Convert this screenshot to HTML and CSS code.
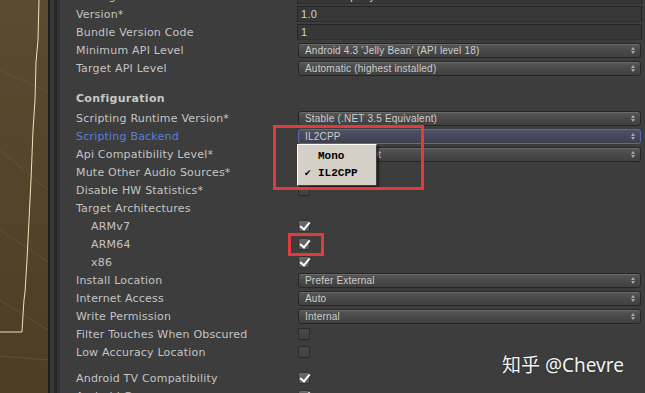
FILE: index.html
```html
<!DOCTYPE html>
<html lang="en">
<head>
    <meta charset="UTF-8">
    <title>Player Settings - Android</title>
    <link rel="stylesheet" href="styles.css">
</head>
<body>

<div class="window">
    <div class="scene">
        <svg class="scene-lines" width="48" height="393" viewBox="0 0 48 393">
            <path d="M0 70 L48 92 M0 150 L48 190 M0 230 L48 262 M0 300 L48 330 M0 356 L48 360" stroke="#6b5c3f" stroke-width="1" fill="none" opacity="0.6"/>
            <path d="M39 0 L38 40 L36 62 L35 100 L33 130 L31 180 L29 220 L27 260 L25 292 L24 300 L23 315 L22 332 L0 332" stroke="#efe3b8" stroke-width="1" fill="none"/>
        </svg>
    </div>
    <div class="splitter">
        <div class="split-a"></div>
        <div class="split-b"></div>
        <div class="split-c"></div>
        <div class="split-d"></div>
    </div>

    <div class="inspector">
        <div class="row">
            <span class="label">Package Name</span>
            <div class="textfield">com.Company.ProductName</div>
        </div>
        <div class="row">
            <span class="label">Version*</span>
            <div class="textfield">1.0</div>
        </div>
        <div class="row">
            <span class="label">Bundle Version Code</span>
            <div class="textfield">1</div>
        </div>
        <div class="row">
            <span class="label">Minimum API Level</span>
            <div class="dropdown">Android 4.3 'Jelly Bean' (API level 18)</div>
        </div>
        <div class="row">
            <span class="label">Target API Level</span>
            <div class="dropdown">Automatic (highest installed)</div>
        </div>

        <div class="heading">Configuration</div>

        <div class="row">
            <span class="label">Scripting Runtime Version*</span>
            <div class="dropdown">Stable (.NET 3.5 Equivalent)</div>
        </div>
        <div class="row">
            <span class="label active">Scripting Backend</span>
            <div class="dropdown focused">IL2CPP</div>
        </div>
        <div class="row">
            <span class="label">Api Compatibility Level*</span>
            <div class="dropdown">.NET 2.0 Subset</div>
        </div>
        <div class="row">
            <span class="label">Mute Other Audio Sources*</span>
            <div><span class="checkbox"></span></div>
        </div>
        <div class="row">
            <span class="label">Disable HW Statistics*</span>
            <div><span class="checkbox"></span></div>
        </div>
        <div class="row">
            <span class="label">Target Architectures</span>
            <div></div>
        </div>
        <div class="row">
            <span class="label sub">ARMv7</span>
            <div><span class="checkbox checked"></span></div>
        </div>
        <div class="row">
            <span class="label sub">ARM64</span>
            <div><span class="checkbox checked"></span></div>
        </div>
        <div class="row">
            <span class="label sub">x86</span>
            <div><span class="checkbox checked"></span></div>
        </div>
        <div class="row">
            <span class="label">Install Location</span>
            <div class="dropdown">Prefer External</div>
        </div>
        <div class="row">
            <span class="label">Internet Access</span>
            <div class="dropdown">Auto</div>
        </div>
        <div class="row">
            <span class="label">Write Permission</span>
            <div class="dropdown">Internal</div>
        </div>
        <div class="row">
            <span class="label">Filter Touches When Obscured</span>
            <div><span class="checkbox"></span></div>
        </div>
        <div class="row">
            <span class="label">Low Accuracy Location</span>
            <div><span class="checkbox"></span></div>
        </div>

        <div class="row spaced">
            <span class="label">Android TV Compatibility</span>
            <div><span class="checkbox checked"></span></div>
        </div>
        <div class="row">
            <span class="label">Android Game</span>
            <div><span class="checkbox checked"></span></div>
        </div>
    </div>

    <!-- dropdown menu opened over the Api Compatibility row -->
    <div class="popup">
        <div class="popup-item">Mono</div>
        <div class="popup-item selected">IL2CPP</div>
    </div>

    <!-- red annotation frames -->
    <div class="mark mark-backend"></div>
    <div class="mark mark-arm64"></div>

    <div class="watermark">知乎 @Chevre</div>
</div>

</body>
</html>
```

FILE: styles.css
```css
html, body {
    margin: 0;
    padding: 0;
    width: 645px;
    height: 393px;
    overflow: hidden;
    background-color: #3d3d3d;
}

.window {
    position: relative;
    display: flex;
    width: 645px;
    height: 393px;
    overflow: hidden;
    font-family: "DejaVu Sans", Verdana, sans-serif;
}

/* scene view on the left */
.scene {
    position: relative;
    width: 48px;
    flex-shrink: 0;
    background: linear-gradient(180deg, #5a4b31 0%, #54452c 40%, #4c3e26 100%);
}

.scene-lines {
    position: absolute;
    left: 0;
    top: 0;
}

.splitter {
    display: flex;
    flex-shrink: 0;
}

.split-a { width: 2px; background-color: #1f1f1f; }
.split-b { width: 4px; background-color: #383838; }
.split-c { width: 3px; background-color: #272727; }
.split-d { width: 3px; background-color: #333333; }

/* inspector */
.inspector {
    flex: 1;
    margin-top: -13px;
    padding: 0 3px 0 16px;
    color: #c4c4c4;
    font-size: 11px;
}

.row {
    display: grid;
    grid-template-columns: 221px 1fr;
    align-items: center;
    height: 18px;
}

.row.spaced {
    margin-top: 8px;
}

.label {
    white-space: nowrap;
    letter-spacing: 0.2px;
}

.label.sub {
    padding-left: 15px;
}

.label.active {
    color: #5b7fda;
}

.heading {
    height: 18px;
    line-height: 18px;
    margin-top: 13px;
    margin-bottom: 1px;
    font-weight: bold;
    color: #c8c8c8;
    letter-spacing: 0.3px;
}

.textfield {
    height: 14px;
    line-height: 14px;
    padding-left: 3px;
    background-color: #373737;
    border: 1px solid #252525;
    border-bottom-color: #2e2e2e;
    color: #cfcfcf;
    font-family: "Liberation Sans", Arial, sans-serif;
    font-size: 11px;
    letter-spacing: 0.3px;
    white-space: nowrap;
    overflow: hidden;
}

.dropdown {
    position: relative;
    height: 13px;
    line-height: 13px;
    margin: 0 1px;
    padding-left: 6px;
    background: linear-gradient(180deg, #585858 0%, #4a4a4a 45%, #404040 100%);
    border: 1px solid #262626;
    border-radius: 3px;
    box-shadow: inset 0 1px 0 #6a6a6a;
    color: #cdcdcd;
    font-family: "Liberation Sans", Arial, sans-serif;
    font-size: 10px;
    letter-spacing: 0.2px;
    white-space: nowrap;
}

/* up / down arrow pair */
.dropdown::before,
.dropdown::after {
    content: "";
    position: absolute;
    right: 5px;
    width: 0;
    height: 0;
    border-left: 2px solid transparent;
    border-right: 2px solid transparent;
}

.dropdown::before {
    top: 3px;
    border-bottom: 3px solid #a8a8a8;
}

.dropdown::after {
    top: 7px;
    border-top: 3px solid #a8a8a8;
}

.dropdown.focused {
    background: linear-gradient(180deg, #4d5266 0%, #444858 50%, #3d404c 100%);
    border-color: #5a66a8;
    box-shadow: none;
}

.checkbox {
    display: block;
    position: relative;
    width: 10px;
    height: 10px;
    margin-left: 1px;
    border: 1px solid #2a2a2a;
    border-radius: 2px;
    background: linear-gradient(180deg, #4a4a4a 0%, #404040 100%);
}

.checkbox.checked {
    background: linear-gradient(180deg, #686868 0%, #575757 100%);
    border-color: #333333;
}

.checkbox.checked::after {
    content: "";
    position: absolute;
    left: 3px;
    top: -1px;
    width: 4px;
    height: 8px;
    border-right: 2px solid #ffffff;
    border-bottom: 2px solid #ffffff;
    transform: rotate(40deg);
}

/* opened dropdown menu */
.popup {
    position: absolute;
    left: 297px;
    top: 144px;
    width: 78px;
    padding: 3px 0;
    background-color: #d4d0c8;
    border: 1px solid;
    border-color: #ffffff #404040 #404040 #ffffff;
    box-shadow: 2px 2px 2px rgba(0, 0, 0, 0.55);
}

.popup-item {
    position: relative;
    height: 17px;
    line-height: 17px;
    padding-left: 20px;
    color: #000000;
    font-family: "Liberation Mono", "Courier New", monospace;
    font-size: 11px;
    font-weight: bold;
}

.popup-item.selected::before {
    content: "\2714";
    position: absolute;
    left: 6px;
    font-family: "DejaVu Sans", sans-serif;
    font-size: 9px;
    font-weight: normal;
}

/* annotation frames */
.mark {
    position: absolute;
    border: 3px solid #e23b3e;
}

.mark-backend {
    left: 273px;
    top: 125px;
    width: 145px;
    height: 59px;
}

.mark-arm64 {
    left: 288px;
    top: 233px;
    width: 30px;
    height: 17px;
}

.watermark {
    position: absolute;
    left: 502px;
    top: 350px;
    color: #f2f2f2;
    font-family: "Noto Sans", "Noto Sans CJK SC", sans-serif;
    font-size: 19px;
    text-shadow: 0 0 2px rgba(0, 0, 0, 0.5);
    white-space: nowrap;
}
```
